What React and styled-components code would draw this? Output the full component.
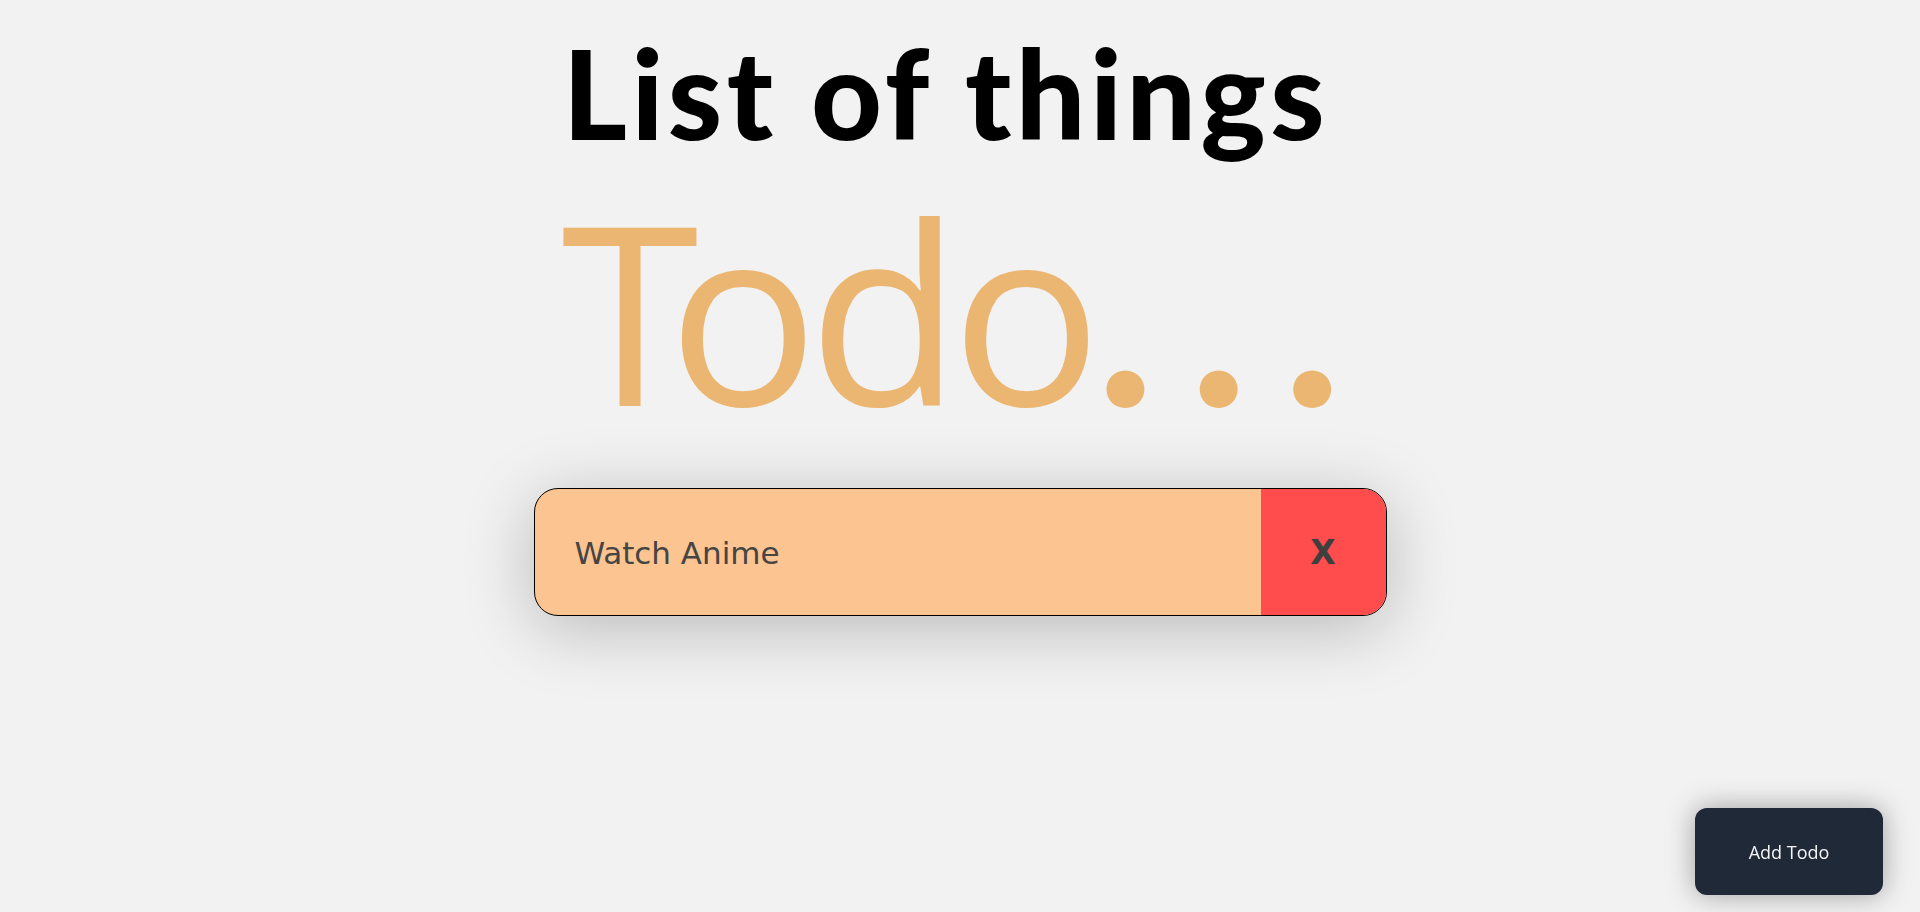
import React from "react";
import styled, { createGlobalStyle } from "styled-components";

const GlobalStyle = createGlobalStyle`
  html, body {
    margin: 0;
    padding: 0;
    background: #f2f2f2;
  }
  body {
    font-family: "Open Sans", "Noto Sans", sans-serif;
    min-height: 912px;
  }
  * { box-sizing: border-box; }
`;

const Page = styled.main`
  display: flex;
  flex-direction: column;
  align-items: center;
  padding-top: 31px;
  min-height: 912px;
`;

const Header = styled.header`
  display: flex;
  flex-direction: column;
  align-items: center;
  margin-right: 28px;
`;

const Title = styled.h1`
  margin: 0;
  font-family: Lato, "Open Sans", sans-serif;
  font-weight: 900;
  font-size: 123px;
  line-height: 1;
  color: #000;
  letter-spacing: 4.4px;
`;

const Subtitle = styled.h2`
  margin: 30px 0 0;
  padding-left: 45px;
  font-family: "Open Sans", "Noto Sans", sans-serif;
  font-weight: 400;
  font-size: 250px;
  line-height: 1;
  color: #ebb672;
  letter-spacing: -10px;
`;

const KernedLetter = styled.span`
  margin-right: -21px;
`;

const Dots = styled.span`
  font-family: Lato, "Open Sans", sans-serif;
  font-weight: 700;
  letter-spacing: 34px;
  margin-left: 4px;
`;

const List = styled.ul`
  list-style: none;
  margin: 54px 0 0;
  padding: 0;
  display: flex;
  flex-direction: column;
  gap: 24px;
`;

const Item = styled.li`
  display: flex;
  width: 853px;
  height: 128px;
  border: 1.5px solid #000;
  border-radius: 24px;
  overflow: hidden;
  background: #fbc490;
  box-shadow: 0 12px 70px rgba(0, 0, 0, 0.24);
`;

const ItemText = styled.span`
  flex: 1;
  display: flex;
  align-items: center;
  padding-left: 40px;
  padding-top: 2px;
  font-family: "DejaVu Sans", Verdana, sans-serif;
  font-size: 31px;
  color: #454545;
`;

const DeleteButton = styled.button`
  width: 125px;
  border: none;
  background: #ff4c4c;
  display: flex;
  align-items: center;
  justify-content: center;
  font-family: "DejaVu Sans", Verdana, sans-serif;
  font-weight: 700;
  font-size: 33px;
  color: #3f3f3f;
  cursor: pointer;
  padding: 0;
`;

const AddButton = styled.button`
  position: fixed;
  right: 37px;
  bottom: 17px;
  width: 188px;
  height: 87px;
  border: none;
  border-radius: 12px;
  background: #1f2937;
  color: #f5f5f5;
  font-family: "Open Sans", "Noto Sans", sans-serif;
  font-weight: 400;
  font-size: 18px;
  box-shadow: 0 0 28px rgba(0, 0, 0, 0.35);
  cursor: pointer;
`;

const todos = ["Watch Anime"];

export default function App() {
  return (
    <>
      <GlobalStyle />
      <Page>
        <Header>
          <Title>List of things</Title>
          <Subtitle>
            <KernedLetter>T</KernedLetter>odo<Dots>...</Dots>
          </Subtitle>
        </Header>
        <List>
          {todos.map((t) => (
            <Item key={t}>
              <ItemText>{t}</ItemText>
              <DeleteButton>X</DeleteButton>
            </Item>
          ))}
        </List>
      </Page>
      <AddButton>Add Todo</AddButton>
    </>
  );
}
